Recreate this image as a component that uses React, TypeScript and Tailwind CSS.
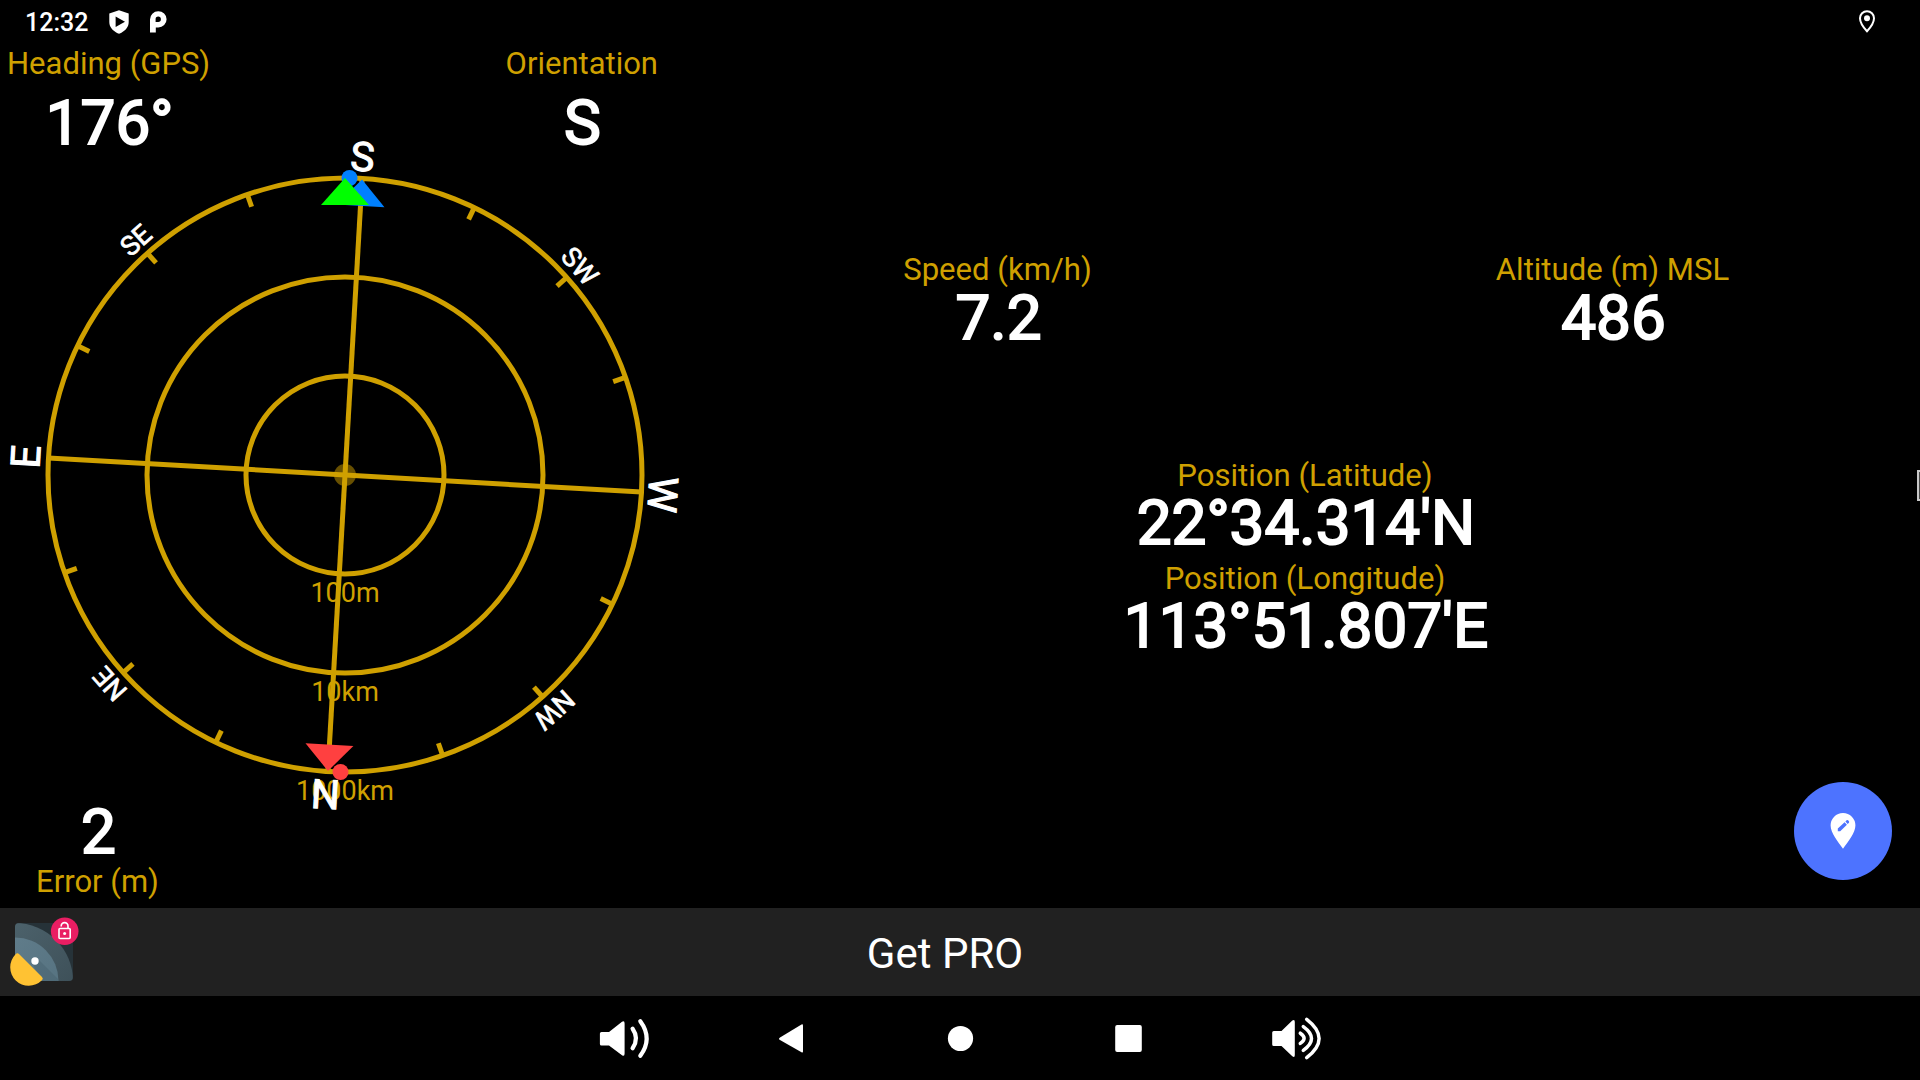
const GOLD = '#cfa000';
const CX = 345;
const CY = 335;
const R = 297;
const CARD_ROTATION = 3.3;

type ReadingProps = { label: string; value: string; tight?: boolean };

function Reading({ label, value, tight = false }: ReadingProps) {
  return (
    <div className="flex h-[103px] flex-col items-center">
      <div className="text-[31.1px] leading-[37px] text-[#cfa000]">{label}</div>
      <div className={`pl-[2px] text-[62px] [-webkit-text-stroke:1.94px_#fff] ${tight ? 'leading-[58px]' : 'leading-[60px]'}`}>
        {value}
      </div>
    </div>
  );
}

const cardinals = [
  { text: 'S', angle: 0, size: 40.5, gap: 7.5, dx: -0.7 },
  { text: 'SW', angle: 45, size: 27, gap: 8, dx: 0 },
  { text: 'W', angle: 90, size: 40.5, gap: 7, dx: 1.5 },
  { text: 'NW', angle: 135, size: 27, gap: 8, dx: 0 },
  { text: 'N', angle: 180, size: 40.5, gap: 8.5, dx: 1 },
  { text: 'NE', angle: 225, size: 27, gap: 8, dx: 0.5 },
  { text: 'E', angle: 270, size: 40.5, gap: 8.5, dx: 0 },
  { text: 'SE', angle: 315, size: 27, gap: 8, dx: 0 },
];

const ticks = Array.from({ length: 16 }, (_, i) => i * 22.5).filter((a) => a % 90 !== 0);

function Compass() {
  return (
    <svg width="690" height="660" viewBox="0 0 690 660" className="block overflow-visible">
      <circle cx={CX} cy={CY} r="11" fill={GOLD} fillOpacity="0.5" />
      <g fill="none" stroke={GOLD} strokeWidth="5">
        <circle cx={CX} cy={CY} r="99" />
        <circle cx={CX} cy={CY} r="198" />
        <circle cx={CX} cy={CY} r={R} />
      </g>
      <g fill={GOLD} fontSize="27" textAnchor="middle">
        <text x={CX} y="462">100m</text>
        <text x={CX} y="561">10km</text>
        <text x={CX} y="660">1000km</text>
      </g>
      <g transform={`rotate(${CARD_ROTATION} ${CX} ${CY})`}>
        <g stroke={GOLD} strokeWidth="5">
          <line x1={CX} y1={CY - R} x2={CX} y2={CY + R} />
          <line x1={CX - R} y1={CY} x2={CX + R} y2={CY} />
          {ticks.map((a) => (
            <line key={a} x1={CX} y1={CY - R} x2={CX} y2={CY - R + 13} transform={`rotate(${a} ${CX} ${CY})`} />
          ))}
        </g>
        <g fill="#fff" stroke="#fff" textAnchor="middle">
          {cardinals.map((c) => (
            <text
              key={c.text}
              x={CX + c.dx}
              y={CY - R - c.gap}
              fontSize={c.size}
              strokeWidth={c.size / 38}
              transform={`rotate(${c.angle} ${CX} ${CY})`}
            >
              {c.text}
            </text>
          ))}
        </g>
        <path d={`M${CX} ${CY - R + 1}l24 26.500h-48z`} fill="#0080ff" />
        <path d={`M${CX} ${CY + R - 0.5}l24 -26.500h-48z`} fill="#ff4040" />
      </g>
      <circle cx="349.5" cy="38" r="8" fill="#0080ff" />
      <circle cx="340.5" cy="632" r="8" fill="#ff4040" />
      <path d="M345 38l24 27h-48z" fill="#00ff00" />
    </svg>
  );
}

function StatusBar() {
  return (
    <header className="flex h-11 items-center justify-between pr-[43px] pl-[25px]">
      <div className="flex items-center">
        <span className="w-[84px] pt-px text-[25px] leading-[44px] font-medium">12:32</span>
        <svg width="20" height="24" viewBox="0 0 20 24" className="block">
          <path d="M10 0.3L19.7 3.6V12C19.7 17.5 15.5 21.8 10 23.7C4.5 21.8 0.3 17.5 0.3 12V3.6Z" fill="#fff" />
          <path d="M6.6 6.6v10.4L16 11.8z" fill="#000" />
        </svg>
        <svg width="18" height="22" viewBox="0 0 18 22" className="ml-[20px] block">
          <path
            fillRule="evenodd"
            d="M1 21.600V8.400A8.300 8.100 0 1 1 9.300 16.400H6.800V21.600zM9.200 5.600A2.700 2.700 0 0 0 6.600 8.400V11H9.200A2.700 2.700 0 0 0 9.200 5.600z"
            fill="#fff"
          />
        </svg>
      </div>
      <svg width="20" height="24" viewBox="0 0 20 24" className="mb-[3px] block">
        <path d="M10 2.2A7 7 0 0 0 3 9.2C3 13.5 7 19 10 22.2C13 19 17 13.5 17 9.2A7 7 0 0 0 10 2.2Z" fill="none" stroke="#fff" strokeWidth="2" />
        <circle cx="10" cy="9.2" r="3" fill="#fff" />
      </svg>
    </header>
  );
}

function AppIcon() {
  return (
    <svg width="80" height="88" viewBox="0 0 80 88" className="block">
      <defs>
        <clipPath id="tile">
          <rect x="15" y="15" width="58" height="58" rx="4" />
        </clipPath>
        <linearGradient id="outer" x1="0" y1="0" x2="1" y2="1">
          <stop offset="0" stopColor="#536a74" />
          <stop offset="1" stopColor="#374850" />
        </linearGradient>
        <linearGradient id="inner" x1="0" y1="0" x2="1" y2="1">
          <stop offset="0" stopColor="#64808e" />
          <stop offset="1" stopColor="#526f7d" />
        </linearGradient>
      </defs>
      <g clipPath="url(#tile)">
        <rect x="15" y="15" width="58" height="58" fill="#263238" />
        <circle cx="15" cy="73" r="58" fill="url(#outer)" />
        <circle cx="15" cy="73" r="43.5" fill="url(#inner)" />
        <path d="M38 51L58 71V73H42L32 55z" fill="#37505c" fillOpacity="0.25" />
      </g>
      <path d="M15.600 46.200Q17.300 44.300 19 46L42 69Q43.700 70.700 41.900 72.300A18.500 18.500 0 0 1 15.600 46.200z" fill="#ffc233" />
      <circle cx="35" cy="53" r="3.700" fill="#fff" />
      <circle cx="64.700" cy="23.300" r="13.800" fill="#e91e63" />
      <g fill="none" stroke="#fff" strokeWidth="1.600">
        <rect x="59" y="20.500" width="11.200" height="10" rx="1" />
        <path d="M61.200 18.500V18A3.400 3.400 0 0 1 68 18V20.500" />
      </g>
      <circle cx="64.600" cy="25.400" r="1.500" fill="#fff" />
    </svg>
  );
}

function NavBar() {
  return (
    <nav className="flex h-[84px] items-center justify-center gap-[104px]">
      <svg width="64" height="64" viewBox="0 0 64 64" fill="#fff" className="block">
        <path d="M9.500 26H17L30 15.800Q32.600 14.300 32.600 17.500V47.500Q32.600 51 30 49.200L17 39.500H9.500Q7.900 39.500 7.900 38V27.500Q7.900 26 9.500 26z" />
        <g fill="none" stroke="#fff" strokeWidth="4.200" strokeLinecap="round">
          <path d="M40.600 22.800Q47.400 32.500 40.600 42.200" />
          <path d="M48.300 15.200Q61 32.500 48.300 49.800" />
        </g>
      </svg>
      <svg width="64" height="64" viewBox="0 0 64 64" fill="#fff" className="block">
        <path d="M43 19.500v26q0 1.500-1.500 .8L20 34q-2-1.300 0-2.600L41.500 18.500q1.500-.8 1.500 1z" />
      </svg>
      <svg width="64" height="64" viewBox="0 0 64 64" fill="#fff" className="block">
        <circle cx="32.500" cy="32.500" r="12.600" />
      </svg>
      <svg width="64" height="64" viewBox="0 0 64 64" fill="#fff" className="block">
        <rect x="19.200" y="19" width="26.600" height="27" rx="2" />
      </svg>
      <svg width="64" height="64" viewBox="0 0 64 64" fill="#fff" className="block">
        <path d="M9.800 25H17.500L28.300 14.600Q30.800 12.800 30.800 16V49Q30.800 52.200 28.300 50.200L17.500 40H9.800Q8.200 40 8.200 38.500V26.500Q8.200 25 9.800 25z" />
        <g fill="none" stroke="#fff" strokeWidth="3.500" strokeLinecap="round">
          <path d="M36.300 27.200Q43.900 32.300 36.300 37.400" />
          <path d="M39.300 20.600Q55.700 32.500 39.300 44.400" />
          <path d="M42.700 13.300Q67.500 32.500 42.700 51.700" />
        </g>
      </svg>
    </nav>
  );
}

export default function App() {
  return (
    <div className="flex h-[1080px] w-[1920px] flex-col overflow-hidden bg-black font-['Roboto',sans-serif] text-white">
      <StatusBar />
      <main className="relative flex h-[864px]">
        <section className="flex w-[690px] flex-col">
          <div className="flex h-24 justify-between pr-[32px] pl-[7px]">
            <div className="flex flex-col items-center">
              <div className="text-[31px] leading-[39px] text-[#cfa000]">Heading (GPS)</div>
              <div className="mt-[10px] pl-[2px] text-[62px] leading-[60px] [-webkit-text-stroke:1.94px_#fff]">176°</div>
            </div>
            <div className="flex flex-col items-center">
              <div className="text-[31px] leading-[39px] text-[#cfa000]">Orientation</div>
              <div className="mt-[10px] pl-px text-[62px] leading-[60px] [-webkit-text-stroke:1.94px_#fff]">S</div>
            </div>
          </div>
          <Compass />
          <div className="flex w-[195px] flex-col items-center pt-px">
            <div className="pl-[2px] text-[62px] leading-[62px] [-webkit-text-stroke:1.94px_#fff]">2</div>
            <div className="mt-px text-[31px] leading-[35px] text-[#cfa000]">Error (m)</div>
          </div>
        </section>
        <section className="flex w-[1230px] flex-col pt-[207px]">
          <div className="grid grid-cols-2">
            <Reading label="Speed (km/h)" value="7.2" />
            <Reading label="Altitude (m) MSL" value="486" />
          </div>
          <div className="mt-[103px]">
            <Reading label="Position (Latitude)" value="22°34.314'N" tight />
            <Reading label="Position (Longitude)" value="113°51.807'E" tight />
          </div>
        </section>
        <button className="absolute top-[738px] left-[1794px] flex h-[98px] w-[98px] items-center justify-center rounded-full bg-[#4d73ff]">
          <svg width="26" height="36" viewBox="0 0 26 36" className="block">
            <path d="M13 0A12.400 12.400 0 0 0 .6 12.600C.6 20 8 29 13 35.700C18 29 25.400 20 25.400 12.600A12.400 12.400 0 0 0 13 0z" fill="#fff" />
            <path d="M7.800 15.400l6.800-6.200 2.300 2.500-6.700 6.500H7.800zM15.400 8.400l1.200-1.100q.8-.7 1.500 0l.8 .9q.6 .8 0 1.500l-1.200 1.200z" fill="#4d73ff" />
          </svg>
        </button>
        <div className="absolute top-[426px] right-0 h-[31px] w-[3px] border-y-2 border-l-2 border-[#c8c8c8] bg-[#444]" />
      </main>
      <footer className="grid h-[88px] grid-cols-[80px_1fr_110px] items-center bg-[#212121]">
        <AppIcon />
        <div className="pt-[3px] text-center text-[42px] leading-[85px]">Get PRO</div>
      </footer>
      <NavBar />
    </div>
  );
}
